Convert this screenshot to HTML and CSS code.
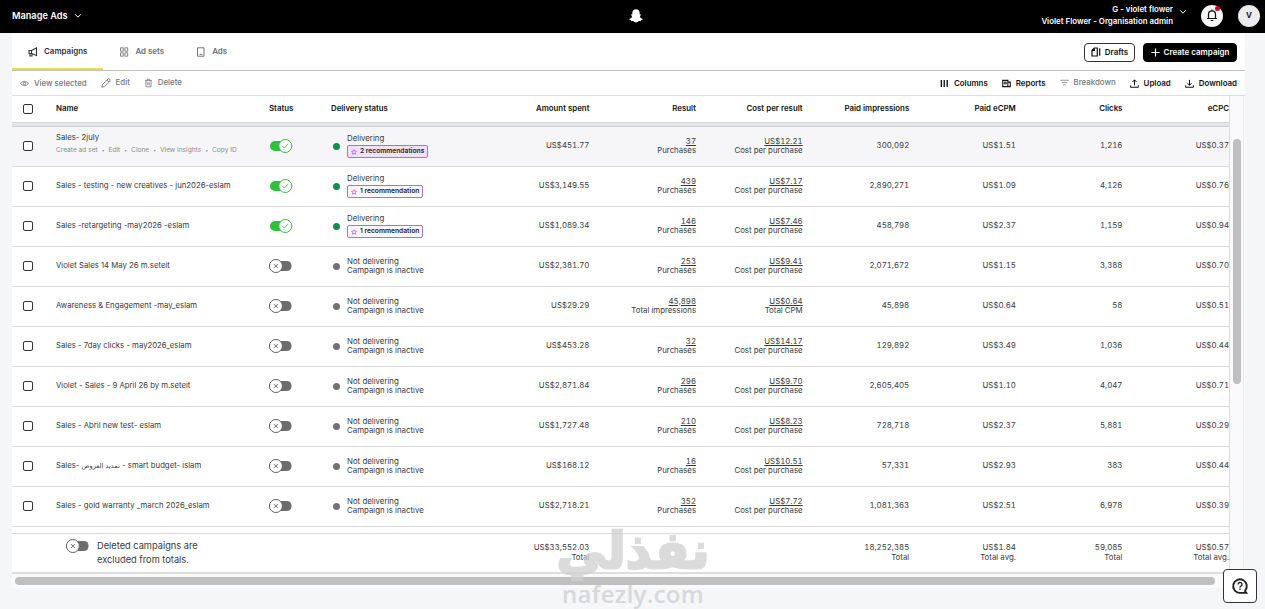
FILE: index.html
```html
<!doctype html>

<html lang="en">

<head>
	<meta charset="utf-8">
	<meta name="viewport" content="width=device-width, initial-scale=1.0">
	<title>Manage Ads</title>
	<link rel="stylesheet" href="styles.css">
</head>

<body>
	<svg class="sprite">
		<symbol id="on" viewBox="0 0 24 16">
			<rect x="1" y="3" width="18" height="10" rx="5" fill="#2dc13f" />
			<circle cx="16.3" cy="8" r="6.5" fill="#fff" stroke="#2dc13f" />
			<path d="M13.6 8.2l1.8 1.9 3.6-4" fill="none" stroke="#2dc13f" stroke-width=".9" />
		</symbol>
		<symbol id="off" viewBox="0 0 24 16">
			<rect x="5" y="3" width="17.5" height="10" rx="4.5" fill="#6b6d6e" />
			<circle cx="6.9" cy="8" r="6.5" fill="#fff" stroke="#606263" />
			<path d="M4.9 6l4 4M8.9 6l-4 4" fill="none" stroke="#606263" stroke-width=".9" />
		</symbol>
		<symbol id="star" viewBox="0 0 12 12">
			<path d="M6 1.2l1.4 3.2 3.6.3-2.7 2.4.8 3.6L6 8.8l-3.1 1.9.8-3.6L1 4.7l3.6-.3z" fill="none" stroke="#9149c6" stroke-width="1.2" />
		</symbol>
		<symbol id="chevron" viewBox="0 0 8 6">
			<path d="M1.2 1.3L4 4.2l2.8-2.9" fill="none" stroke="#fff" stroke-width="1" />
		</symbol>
	</svg>

	<header class="topbar">
		<div class="product">Manage Ads <svg class="chev"><use href="#chevron" /></svg></div>
		<svg class="ghost" viewBox="0 0 14 14">
			<path d="M7 .3C9.2.3 10.7 1.8 10.7 4v1.5c.5.2 1.1-.3 1.4.1.3.6-.7.9-1.1 1.3-.2 1.3 1 2.6 2.7 3.1.3.5-.5.9-1.4 1.1-.4.2-.2.8-.7.9-.7 0-1.4-.2-2.1.3-.8.7-1.5 1.2-2.5 1.2s-1.7-.5-2.5-1.2c-.7-.5-1.4-.3-2.1-.3-.5-.1-.3-.7-.7-.9C.8 10.900 0 10.500.3 10 2 9.500 3.200 8.200 3 6.900c-.4-.4-1.400-.7-1.100-1.300.3-.4.900.1 1.400-.1V4C3.300 1.800 4.800.3 7 .3z" fill="#fff" />
		</svg>
		<div class="account">
			<div class="org">G - violet flower<br>Violet Flower - Organisation admin</div>
			<svg class="chev org-chev"><use href="#chevron" /></svg>
			<div class="round bell">
				<svg viewBox="0 0 12 13" width="12" height="13">
					<path d="M1 9.5h10M2.5 9.3V5.300a3.500 3.500 0 0 1 7 0v4M4.700 11.500h2.600M6 .6v1.200" fill="none" stroke="#111" stroke-width="1.2" />
				</svg>
				<span class="alert"></span>
			</div>
			<div class="round">V</div>
		</div>
	</header>

	<main class="panel">
		<nav class="tabs">
			<div class="tab active">
				<svg viewBox="0 0 10 10" width="10" height="10">
					<path d="M1 3.5h2.500v3H1zM3.500 3.500L8.500 1v7.500L3.500 6.500M2 6.500V9h2V6.700" fill="none" stroke="#333" stroke-width="1.1" />
				</svg>Campaigns
			</div>
			<div class="tab">
				<svg viewBox="0 0 10 10" width="10" height="10">
					<path d="M1.5.8h2.800v3.400H1.500zM5.900.8h2.800v3.400H5.900zM1.500 5.800h2.800v3.400H1.500zM5.900 5.800h2.800v3.400H5.900z" fill="none" stroke="#777" stroke-width=".9" />
				</svg>Ad sets
			</div>
			<div class="tab">
				<svg viewBox="0 0 10 10" width="10" height="10">
					<path d="M1.5.8h6.500v8.400H1.500zM3.500 7.300h3" fill="none" stroke="#777" />
				</svg>Ads
			</div>
			<div class="tab-buttons">
				<button class="button">
					<svg viewBox="0 0 10 10" width="10" height="10">
						<path d="M3.3 1h3v8H1V3.300zM3.300 1v2.300H1M8.700 1.300v7.500" fill="none" stroke="#111" stroke-width="1.2" />
					</svg>Drafts
				</button>
				<button class="button primary">
					<svg viewBox="0 0 10 10" width="9" height="9">
						<path d="M5 .5v9M.5 5h9" stroke="#fff" stroke-width="1.3" />
					</svg>Create campaign
				</button>
			</div>
		</nav>

		<div class="toolbar">
			<div class="tool">
				<svg viewBox="0 0 10 10" width="9" height="9">
					<path d="M.5 5Q5 .3 9.500 5 5 9.700.5 5z" fill="none" stroke="#777" />
					<circle cx="5" cy="5" r="1.3" fill="none" stroke="#777" />
				</svg>View selected
			</div>
			<div class="tool raised">
				<svg viewBox="0 0 10 10" width="10" height="10">
					<path d="M.8 9.200l.7-2.700L7 1q.9-.7 1.700.2t.2 1.800L3.500 8.500zM6 2l2 2" fill="none" stroke="#777" stroke-width=".9" />
				</svg>Edit
			</div>
			<div class="tool raised">
				<svg viewBox="0 0 10 10" width="9" height="10">
					<path d="M1.300 2.300h7.400M3.500 2.200V.9h3v1.300M2.200 2.300v6.900h5.600V2.300M4.200 4v3.500M5.800 4v3.500" fill="none" stroke="#777" stroke-width=".9" />
				</svg>Delete
			</div>
			<div class="tools-right">
				<div class="tool dark">
					<svg viewBox="0 0 10 10" width="9" height="9">
						<path d="M1.500 1v8M4.700 1v8M8 1v8" stroke="#111" stroke-width="1.5" />
					</svg>Columns
				</div>
				<div class="tool dark">
					<svg viewBox="0 0 10 10" width="9" height="9">
						<path d="M.8 1.500h5.700v7H.8zM6.500 3.500h2.700v5H6.500M2 3.600h3.300M2 5.300h3.300" fill="none" stroke="#111" stroke-width="1.2" />
					</svg>Reports
				</div>
				<div class="tool raised">
					<svg viewBox="0 0 10 10" width="9" height="9">
						<path d="M.5 2.500h9M2 5h6M3.500 7.500h3" stroke="#888" />
					</svg>Breakdown
				</div>
				<div class="tool dark">
					<svg viewBox="0 0 10 10" width="9" height="9">
						<path d="M5 7V1M2.700 3.300L5 1l2.300 2.300M.7 7v2.200h8.600V7" fill="none" stroke="#111" stroke-width="1.1" />
					</svg>Upload
				</div>
				<div class="tool dark">
					<svg viewBox="0 0 10 10" width="9" height="9">
						<path d="M5 1v6M2.700 4.700L5 7l2.300-2.300M.7 7v2.200h8.600V7" fill="none" stroke="#111" stroke-width="1.1" />
					</svg>Download
				</div>
			</div>
		</div>

		<div class="grid">
			<div class="table">
				<div class="row head">
					<span class="check"></span>
					<div>Name</div>
					<div>Status</div>
					<div>Delivery status</div>
					<div class="num">Amount spent</div>
					<div class="num">Result</div>
					<div class="num">Cost per result</div>
					<div class="num">Paid impressions</div>
					<div class="num">Paid eCPM</div>
					<div class="num">Clicks</div>
					<div class="num">eCPC</div>
				</div>
				<div class="head-shadow"></div>

				<div class="row hover">
					<span class="check"></span>
					<div class="name">Sales- 2july
						<div class="actions"><span>Create ad set</span><i>•</i><span>Edit</span><i>•</i><span>Clone</span><i>•</i><span>View insights</span><i>•</i><span>Copy ID</span></div>
					</div>
					<svg class="toggle"><use href="#on" /></svg>
					<div class="delivery live"><div>Delivering<br><span class="badge"><svg><use href="#star" /></svg>2 recommendations</span></div></div>
					<div class="num">US$451.77</div>
					<div class="num"><u>37</u><br>Purchases</div>
					<div class="num"><u>US$12.21</u><br>Cost per purchase</div>
					<div class="num">300,092</div>
					<div class="num">US$1.51</div>
					<div class="num">1,216</div>
					<div class="num">US$0.37</div>
				</div>
				<div class="row">
					<span class="check"></span>
					<div class="name">Sales - testing - new creatives - jun2026-eslam</div>
					<svg class="toggle"><use href="#on" /></svg>
					<div class="delivery live"><div>Delivering<br><span class="badge"><svg><use href="#star" /></svg>1 recommendation</span></div></div>
					<div class="num">US$3,149.55</div>
					<div class="num"><u>439</u><br>Purchases</div>
					<div class="num"><u>US$7.17</u><br>Cost per purchase</div>
					<div class="num">2,890,271</div>
					<div class="num">US$1.09</div>
					<div class="num">4,126</div>
					<div class="num">US$0.76</div>
				</div>
				<div class="row">
					<span class="check"></span>
					<div class="name">Sales -retargeting -may2026 -eslam</div>
					<svg class="toggle"><use href="#on" /></svg>
					<div class="delivery live"><div>Delivering<br><span class="badge"><svg><use href="#star" /></svg>1 recommendation</span></div></div>
					<div class="num">US$1,089.34</div>
					<div class="num"><u>146</u><br>Purchases</div>
					<div class="num"><u>US$7.46</u><br>Cost per purchase</div>
					<div class="num">458,798</div>
					<div class="num">US$2.37</div>
					<div class="num">1,159</div>
					<div class="num">US$0.94</div>
				</div>
				<div class="row">
					<span class="check"></span>
					<div class="name">Violet Sales 14 May 26 m.seteit</div>
					<svg class="toggle"><use href="#off" /></svg>
					<div class="delivery"><div>Not delivering<br>Campaign is inactive</div></div>
					<div class="num">US$2,381.70</div>
					<div class="num"><u>253</u><br>Purchases</div>
					<div class="num"><u>US$9.41</u><br>Cost per purchase</div>
					<div class="num">2,071,672</div>
					<div class="num">US$1.15</div>
					<div class="num">3,388</div>
					<div class="num">US$0.70</div>
				</div>
				<div class="row">
					<span class="check"></span>
					<div class="name">Awareness &amp; Engagement -may_eslam</div>
					<svg class="toggle"><use href="#off" /></svg>
					<div class="delivery"><div>Not delivering<br>Campaign is inactive</div></div>
					<div class="num">US$29.29</div>
					<div class="num"><u>45,898</u><br>Total impressions</div>
					<div class="num"><u>US$0.64</u><br>Total CPM</div>
					<div class="num">45,898</div>
					<div class="num">US$0.64</div>
					<div class="num">58</div>
					<div class="num">US$0.51</div>
				</div>
				<div class="row">
					<span class="check"></span>
					<div class="name">Sales - 7day clicks - may2026_eslam</div>
					<svg class="toggle"><use href="#off" /></svg>
					<div class="delivery"><div>Not delivering<br>Campaign is inactive</div></div>
					<div class="num">US$453.28</div>
					<div class="num"><u>32</u><br>Purchases</div>
					<div class="num"><u>US$14.17</u><br>Cost per purchase</div>
					<div class="num">129,892</div>
					<div class="num">US$3.49</div>
					<div class="num">1,036</div>
					<div class="num">US$0.44</div>
				</div>
				<div class="row">
					<span class="check"></span>
					<div class="name">Violet - Sales - 9 April 26 by m.seteit</div>
					<svg class="toggle"><use href="#off" /></svg>
					<div class="delivery"><div>Not delivering<br>Campaign is inactive</div></div>
					<div class="num">US$2,871.84</div>
					<div class="num"><u>296</u><br>Purchases</div>
					<div class="num"><u>US$9.70</u><br>Cost per purchase</div>
					<div class="num">2,605,405</div>
					<div class="num">US$1.10</div>
					<div class="num">4,047</div>
					<div class="num">US$0.71</div>
				</div>
				<div class="row">
					<span class="check"></span>
					<div class="name">Sales - Abril new test- eslam</div>
					<svg class="toggle"><use href="#off" /></svg>
					<div class="delivery"><div>Not delivering<br>Campaign is inactive</div></div>
					<div class="num">US$1,727.48</div>
					<div class="num"><u>210</u><br>Purchases</div>
					<div class="num"><u>US$8.23</u><br>Cost per purchase</div>
					<div class="num">728,718</div>
					<div class="num">US$2.37</div>
					<div class="num">5,881</div>
					<div class="num">US$0.29</div>
				</div>
				<div class="row">
					<span class="check"></span>
					<div class="name">Sales- <span class="ar">تمديد العروض</span> - smart budget- islam</div>
					<svg class="toggle"><use href="#off" /></svg>
					<div class="delivery"><div>Not delivering<br>Campaign is inactive</div></div>
					<div class="num">US$168.12</div>
					<div class="num"><u>16</u><br>Purchases</div>
					<div class="num"><u>US$10.51</u><br>Cost per purchase</div>
					<div class="num">57,331</div>
					<div class="num">US$2.93</div>
					<div class="num">383</div>
					<div class="num">US$0.44</div>
				</div>
				<div class="row">
					<span class="check"></span>
					<div class="name">Sales - gold warranty _march 2026_eslam</div>
					<svg class="toggle"><use href="#off" /></svg>
					<div class="delivery"><div>Not delivering<br>Campaign is inactive</div></div>
					<div class="num">US$2,718.21</div>
					<div class="num"><u>352</u><br>Purchases</div>
					<div class="num"><u>US$7.72</u><br>Cost per purchase</div>
					<div class="num">1,081,363</div>
					<div class="num">US$2.51</div>
					<div class="num">6,978</div>
					<div class="num">US$0.39</div>
				</div>

				<div class="row totals">
					<div class="deleted">
						<svg class="toggle"><use href="#off" /></svg>
						<div>Deleted campaigns are<br>excluded from totals.</div>
					</div>
					<div class="num">US$33,552.03<br>Total</div>
					<div></div>
					<div></div>
					<div class="num">18,252,385<br>Total</div>
					<div class="num">US$1.84<br>Total avg.</div>
					<div class="num">59,085<br>Total</div>
					<div class="num">US$0.57<br>Total avg.</div>
				</div>
			</div>
			<div class="vscroll"><div class="thumb"></div></div>
		</div>
		<div class="hscroll"><div class="thumb"></div></div>
	</main>

	<div class="watermark">
		<div class="wm-ar" lang="ar">نفذلي</div>
		<div class="wm-en">nafezly.com</div>
	</div>

	<button class="help">
		<svg viewBox="0 0 18 18" width="18" height="18">
			<path d="M13.500 13.500L15.300 15.900H9a6.800 6.800 0 1 1 4.800-2" fill="none" stroke="#222" stroke-width="1.9" />
			<path d="M7 7.500a2 2 0 1 1 2.900 1.700q-.9.400-.9 1.300M9 11.500v1.400" fill="none" stroke="#222" stroke-width="1.4" />
		</svg>
	</button>
</body>

</html>
```
FILE: styles.css
```css
html {
	box-sizing: border-box;
	font-size: 8px;
	font-family: Inter, "Liberation Sans", "DejaVu Sans", sans-serif;
}

*,
*:before,
*:after {
	box-sizing: inherit;
}

body {
	margin: 0;
	height: 609px;
	overflow: hidden;
	background: #f5f6f8;
	color: #37393b;
	line-height: 9px;
}

svg {
	display: block;
	flex-shrink: 0;
}

.sprite {
	display: none;
}

button {
	font: inherit;
	padding: 0;
}

/* top bar */
.topbar {
	display: grid;
	grid-template-columns: 1fr 14px 1fr;
	align-items: center;
	height: 33px;
	padding: 0 5px 2px 12px;
	background: #000;
	color: #fff;
	font-weight: 600;
}

.product {
	display: flex;
	align-items: center;
	gap: 7px;
	font-size: 9.2px;
}

.chev {
	width: 8px;
	height: 6px;
}

.ghost {
	width: 14px;
	height: 14px;
}

.account {
	display: flex;
	align-items: center;
	justify-content: flex-end;
}

.org {
	margin-right: 6px;
	padding-bottom: 2px;
	font-size: 7.9px;
	line-height: 12px;
	text-align: right;
}

.org-chev {
	margin-bottom: 7px;
}

.round {
	position: relative;
	display: flex;
	align-items: center;
	justify-content: center;
	width: 22px;
	height: 22px;
	margin-left: 15px;
	border-radius: 50%;
	background: #ececee;
	color: #222;
	font-weight: 700;
}

.bell {
	margin-left: 14px;
	background: #f6f6f6;
}

.alert {
	position: absolute;
	top: 1px;
	right: 3px;
	width: 5px;
	height: 5px;
	border-radius: 50%;
	background: #c8003c;
}

/* main panel */
.panel {
	width: 1233px;
	height: 555px;
	margin-left: 12px;
	background: #fff;
	border-bottom: 1px solid #e3e4e6;
}

.tabs {
	display: flex;
	height: 38px;
	border-bottom: 1px solid #bfc0c2;
}

.tab {
	display: flex;
	align-items: center;
	gap: 6px;
	height: 37px;
	padding: 0 16px;
	color: #6d6f71;
	font-size: 7.95px;
	font-weight: 600;
}

.tab.active {
	padding-top: 2px;
	border-bottom: 2px solid #ebdf3c;
	color: #333;
}

.tab-buttons {
	display: flex;
	align-items: center;
	gap: 8px;
	margin: 1px 8px 0 auto;
}

.button {
	display: flex;
	align-items: center;
	justify-content: center;
	gap: 4px;
	width: 51px;
	height: 19px;
	border: 1px solid #333;
	border-radius: 4px;
	background: #fff;
	color: #111;
	font-weight: 600;
}

.button.primary {
	width: 94px;
	border-color: #000;
	background: #000;
	color: #fff;
}

.toolbar {
	display: flex;
	align-items: center;
	gap: 14px;
	height: 25px;
	padding: 0 7px 0 8px;
	border-bottom: 1px solid #dcdddf;
}

.tool {
	display: flex;
	align-items: center;
	gap: 5px;
	color: #747678;
	font-size: 7.85px;
	font-weight: 500;
}

.raised {
	padding-bottom: 1px;
}

.dark {
	color: #111;
	font-size: 7.9px;
	font-weight: 600;
}

.tools-right {
	display: flex;
	gap: 14px;
	margin: 0 1px 0 auto;
}

/* campaign table */
.grid {
	display: flex;
}

.table {
	width: 1218px;
	border-right: 1px solid #dcdddf;
}

.row {
	display: grid;
	grid-template-columns: 44px 213px 62px 1fr repeat(7, 106.6px);
	align-items: center;
	height: 40px;
	padding-bottom: 1px;
	border-bottom: 1px solid #d9dadc;
	font-size: 7.85px;
	white-space: nowrap;
}

.row.head {
	height: 27px;
	padding-bottom: 2px;
	color: #111;
	font-weight: 600;
}

.head-shadow {
	height: 4px;
	background: #e4e5e7;
	border-bottom: 1px solid #cfd0d2;
}

.row.hover {
	background: #f6f6f8;
}

.check {
	width: 10px;
	height: 10px;
	margin-left: 11px;
	border: 1px solid #333;
	border-radius: 2px;
	background: #fff;
}

.head .check {
	margin-top: 2px;
}

.num {
	padding-bottom: 1px;
	font-variant-numeric: tabular-nums;
	text-align: right;
}

.head .num {
	padding-bottom: 0;
}

.name {
	padding-bottom: 1px;
	font-size: 7.75px;
}

.hover .name {
	padding-bottom: 4px;
}

.actions {
	display: flex;
	gap: 4px;
	margin-top: 4px;
	color: #8a8c8e;
	font-size: 6.6px;
}

.actions i {
	font-size: 5px;
	font-style: normal;
}

.toggle {
	width: 24px;
	height: 16px;
}

u {
	text-underline-offset: 1px;
}

.delivery {
	display: flex;
	align-items: center;
	gap: 7px;
	padding-left: 2px;
}

.delivery:before {
	content: "";
	width: 7px;
	height: 7px;
	border-radius: 50%;
	background: #707274;
}

.live:before {
	background: #188a50;
}

.badge {
	display: flex;
	align-items: center;
	gap: 3px;
	width: max-content;
	height: 13px;
	margin-top: 2px;
	padding: 0 3px;
	border: 1px solid #b06fd0;
	border-radius: 2px;
	background: #fbf5ff;
	color: #222;
	font-size: 6.7px;
	font-weight: 600;
}

.hover .badge {
	background: #f0e0fb;
}

.badge svg {
	width: 6px;
	height: 6px;
}

.ar {
	font-family: "DejaVu Sans", sans-serif;
	font-size: 6.6px;
}

.row.totals {
	grid-template-columns: 1fr repeat(7, 106.6px);
	height: 41px;
	margin-top: 6px;
	padding-bottom: 1px;
	border-top: 1px solid #d9dadc;
	border-bottom: 2px solid #dcdddf;
	line-height: 10px;
}

.deleted {
	display: flex;
	gap: 7px;
	padding: 1px 0 0 54px;
	font-size: 9.25px;
	line-height: 14px;
}

.deleted .toggle {
	margin-top: -1px;
}

.vscroll {
	width: 14px;
	padding: 43px 2px 0 3px;
	border-right: 1px solid #e6e7e9;
	background: #fafafa;
}

.vscroll .thumb {
	height: 245px;
	border-radius: 4px;
	background: #bfbfbf;
}

.hscroll {
	padding: 3px;
	background: #fafafa;
}

.hscroll .thumb {
	width: 1200px;
	height: 8px;
	border-radius: 4px;
	background: #bfbfbf;
}

/* overlays */
.watermark {
	position: absolute;
	top: 528px;
	left: 553px;
	width: 160px;
	color: #cfcfd1;
	font-family: "DejaVu Sans", sans-serif;
	font-weight: bold;
	text-align: center;
	opacity: .75;
}

.wm-ar {
	height: 54px;
	font-size: 50px;
	line-height: 46px;
	-webkit-text-stroke: 2.5px #cfcfd1;
}

.wm-en {
	font-family: "Open Sans", sans-serif;
	font-size: 24px;
	font-weight: 600;
	line-height: 24px;
	letter-spacing: .3px;
}

.help {
	position: absolute;
	right: 8px;
	bottom: 6px;
	display: flex;
	align-items: center;
	justify-content: center;
	width: 34px;
	height: 34px;
	border: 1px solid #333;
	border-radius: 4px;
	background: #fff;
}
```
